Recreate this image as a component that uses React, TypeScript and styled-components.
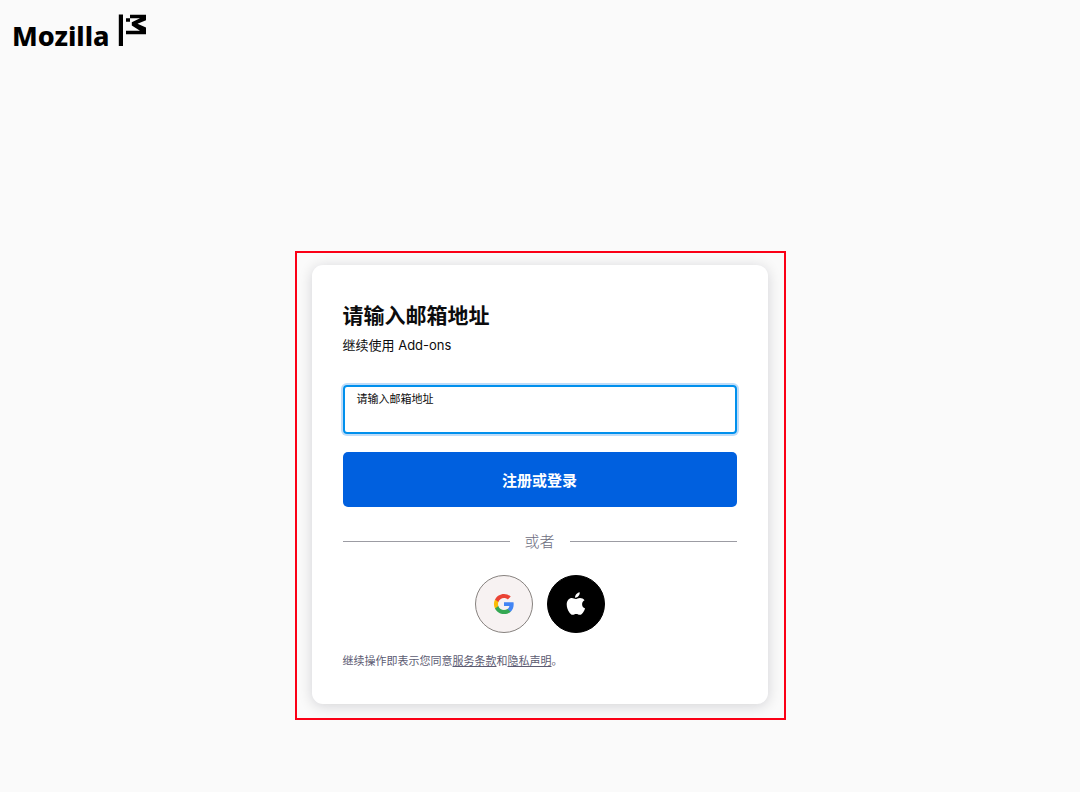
import React from "react";
import styled, { createGlobalStyle } from "styled-components";

const GlobalStyle = createGlobalStyle`
  *, *::before, *::after { box-sizing: border-box; }
  body {
    margin: 0;
    background: #fafafa;
    color: #0c0c0d;
    font-family: Inter, "Noto Sans CJK SC", sans-serif;
  }
`;

const Page = styled.div`
  min-height: 100vh;
  display: flex;
  flex-direction: column;
`;

const Header = styled.header`
  padding: 14px 12px 0;
`;

const Brand = styled.a`
  display: inline-flex;
  align-items: flex-start;
  gap: 8px;
  color: #000;
  text-decoration: none;
`;

const Wordmark = styled.span`
  padding-top: 6px;
  font: 800 27px/32px "Noto Sans", sans-serif;
`;

const Main = styled.main`
  display: flex;
  justify-content: center;
  padding: 199px 16px 32px;
`;

const Frame = styled.div`
  width: 100%;
  max-width: 491px;
  border: 2px solid #fb0016;
  padding: 12px 16px 14px 15px;
`;

const Card = styled.section`
  border-radius: 11px;
  padding: 36px 31px 34px;
  background: #fff;
  box-shadow: 0 2px 14px rgba(12, 12, 30, 0.16);
`;

const Title = styled.h1`
  margin: 0;
  font-size: 21px;
  line-height: 30px;
  font-weight: 700;
`;

const Subtitle = styled.p`
  margin: 4px 0 0;
  font-size: 13px;
  line-height: 20px;
`;

const Form = styled.form`
  display: flex;
  flex-direction: column;
  gap: 18px;
  margin-top: 30px;
`;

const Field = styled.div`
  display: flex;
  flex-direction: column;
  height: 49px;
  padding: 4px 12px;
  border: 2px solid #0090ed;
  border-radius: 4px;
  box-shadow: 0 0 0 2px #bfdcf8;
`;

const Label = styled.label`
  font-size: 11px;
  line-height: 16px;
`;

const EmailInput = styled.input`
  width: 100%;
  height: 20px;
  padding: 0;
  border: 0;
  outline: 0;
  background: transparent;
  font: inherit;
  font-size: 15px;
`;

const SubmitButton = styled.button`
  height: 55px;
  border: 0;
  border-radius: 5px;
  background: #0060df;
  color: #fff;
  font-family: inherit;
  font-size: 15px;
  font-weight: 700;
  cursor: pointer;
`;

const Divider = styled.div`
  display: flex;
  align-items: center;
  gap: 15px;
  margin-top: 23px;
  color: #6d6d7e;
  font-size: 15px;
  font-weight: 300;
  line-height: 23px;

  &::before,
  &::after {
    content: "";
    flex: 1;
    height: 1px;
    background: #9c9ca3;
  }
`;

const Providers = styled.div`
  display: flex;
  justify-content: center;
  gap: 14px;
  margin-top: 22px;
`;

const ProviderButton = styled.button<{ $dark?: boolean }>`
  display: grid;
  place-items: center;
  width: 58px;
  height: 58px;
  padding: 0;
  border: 1px solid ${(p) => (p.$dark ? "#000" : "#87827f")};
  border-radius: 50%;
  background: ${(p) => (p.$dark ? "#000" : "#f7f2f2")};
  color: #fff;
  cursor: pointer;
`;

const Terms = styled.p`
  margin: 19px 0 0;
  color: #5c5b72;
  font-size: 11px;
  line-height: 18px;
`;

const TermsLink = styled.a`
  color: inherit;
  text-decoration: underline;
  text-underline-offset: 1px;
`;

const FlagMark = () => (
  <svg width="28" height="33" viewBox="0 0 28 33" aria-hidden="true">
    <path d="M.8.5H5V32H.8zM8 4.200h4v3.500H8zM12 .7h16v5.600L19.500 9.700 28 13.400v6.800H8v-3.500h14L13.800 11.600V8.200L22 4.200H12z" />
  </svg>
);

const GoogleIcon = () => (
  <svg width="22" height="22" viewBox="0 0 24 24" aria-hidden="true">
    <path fill="#4285f4" d="M22.56 12.25c0-.78-.07-1.53-.2-2.25H12v4.26h5.92c-.26 1.37-1.04 2.53-2.21 3.31v2.77h3.57c2.08-1.92 3.28-4.74 3.28-8.09z" />
    <path fill="#34a853" d="M12 23c2.97 0 5.46-.98 7.28-2.66l-3.57-2.77c-.98.66-2.23 1.06-3.71 1.06-2.86 0-5.29-1.93-6.16-4.53H2.18v2.84C3.99 20.53 7.7 23 12 23z" />
    <path fill="#fbbc05" d="M5.84 14.09c-.22-.66-.35-1.36-.35-2.09s.13-1.43.35-2.09V7.07H2.18C1.43 8.55 1 10.22 1 12s.43 3.45 1.18 4.93l3.66-2.84z" />
    <path fill="#ea4335" d="M12 5.38c1.62 0 3.06.56 4.21 1.64l3.15-3.15C17.45 2.09 14.97 1 12 1 7.7 1 3.99 3.47 2.18 7.07l3.66 2.84c.87-2.6 3.3-4.53 6.16-4.53z" />
  </svg>
);

const AppleIcon = () => (
  <svg width="20" height="24" viewBox="0 0 19 24" fill="currentColor" aria-hidden="true">
    <path d="M13.2.2c.2 1.500-.4 2.900-1.200 3.900-.9 1.100-2.200 1.800-3.400 1.700-.2-1.400.5-2.800 1.300-3.700C10.800 1 12.200.3 13.200.2zM18 8.200c-1.600 1-2.400 2.300-2.400 4 0 2 1.200 3.600 3 4.300-.5 1.500-1.300 3-2.200 4.200-.9 1.200-1.700 2.100-3.100 2.100s-1.900-.8-3.600-.8-2.300.8-3.600.8c-1.400 0-2.400-1.200-3.400-2.600C1.200 18.200.2 15.300.2 12.600c0-4 2.500-6.500 5.200-6.500 1.500 0 2.800 1 3.800 1 .9 0 2.400-1.100 4.200-1.100 1.900 0 3.600.8 4.600 2.200z" />
  </svg>
);

export default function App() {
  return (
    <Page>
      <GlobalStyle />
      <Header>
        <Brand href="#" aria-label="Mozilla">
          <Wordmark>Mozilla</Wordmark>
          <FlagMark />
        </Brand>
      </Header>
      <Main>
        <Frame>
          <Card>
            <Title>请输入邮箱地址</Title>
            <Subtitle>继续使用 Add-ons</Subtitle>
            <Form onSubmit={(e) => e.preventDefault()}>
              <Field>
                <Label htmlFor="email">请输入邮箱地址</Label>
                <EmailInput id="email" type="email" />
              </Field>
              <SubmitButton type="submit">注册或登录</SubmitButton>
            </Form>
            <Divider>或者</Divider>
            <Providers>
              <ProviderButton type="button" aria-label="Google">
                <GoogleIcon />
              </ProviderButton>
              <ProviderButton type="button" aria-label="Apple" $dark>
                <AppleIcon />
              </ProviderButton>
            </Providers>
            <Terms>
              继续操作即表示您同意<TermsLink href="#terms">服务条款</TermsLink>和
              <TermsLink href="#privacy">隐私声明</TermsLink>。
            </Terms>
          </Card>
        </Frame>
      </Main>
    </Page>
  );
}
